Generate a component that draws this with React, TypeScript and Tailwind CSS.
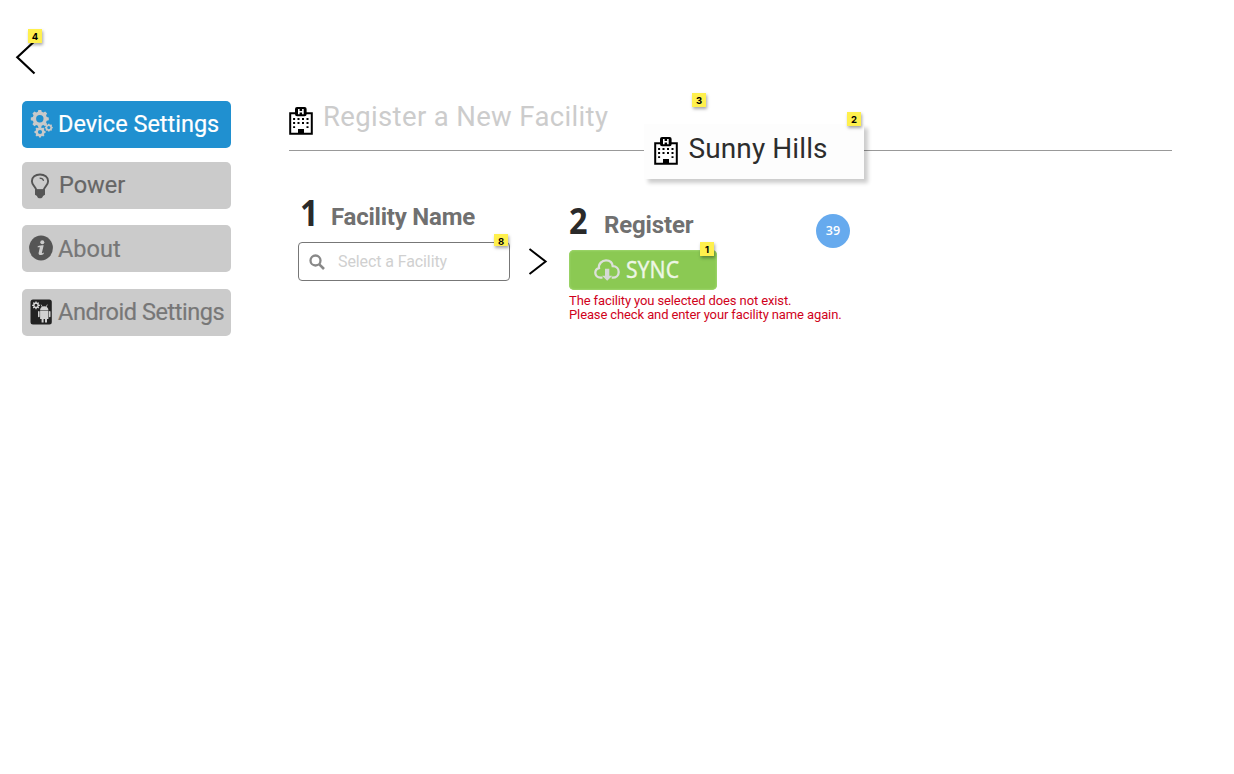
import type { ReactNode } from "react";
import clsx from "clsx";

function Badge({ n, className, tail }: { n: number; className: string; tail?: boolean }) {
  return (
    <span
      className={clsx(
        "absolute z-10 flex w-[14px] items-center justify-center bg-[#fff04d] font-['Inter',sans-serif] text-[9.5px] font-bold leading-none text-black shadow-[1px_2px_3px_rgba(0,0,0,0.35)]",
        tail ? "h-[12px] pt-[3px]" : "h-[14px] pt-px",
        className,
      )}
    >
      {n}
    </span>
  );
}

function HospitalIcon({ className }: { className?: string }) {
  return (
    <svg viewBox="0 0 24 28" className={clsx("h-[28px] w-[24px] shrink-0", className)} fill="none">
      <path d="M6.5 6.2H1.2V26.8H22.8V6.2H17" stroke="#000" strokeWidth="2" />
      <rect x="7" y="1.1" width="9.6" height="7.2" rx="1" stroke="#000" strokeWidth="2" fill="#000" />
      <path d="M9.8 1.9V7.3M13.9 1.9V7.3M9.8 4.7H13.9" stroke="#fff" strokeWidth="1.6" />
      <path
        d="M4.1 11.1h2v1.8h-2zM8.5 11.1h2v1.8h-2zM13 11.1h2v1.8h-2zM17.500 11.1h2v1.8h-2zM4.1 15.1h2v1.8h-2zM8.5 15.1h2v1.8h-2zM13 15.1h2v1.8h-2zM17.500 15.1h2v1.8h-2zM4.1 19.3h2v1.8h-2zM17.500 19.3h2v1.8h-2zM9 22h6v5H9z"
        fill="#000"
      />
    </svg>
  );
}

function gear(cx: number, cy: number, outer: number, inner: number, teeth: number) {
  const step = (Math.PI * 2) / teeth;
  const points: string[] = [];
  for (let i = 0; i < teeth; i++) {
    const a = i * step - Math.PI / 2;
    for (const [r, o] of [[inner, -0.34], [outer, -0.2], [outer, 0.2], [inner, 0.34]]) {
      points.push(`${(cx + r * Math.cos(a + o * step)).toFixed(2)} ${(cy + r * Math.sin(a + o * step)).toFixed(2)}`);
    }
  }
  return `M${points.join("L")}Z`;
}

function hole(cx: number, cy: number, r: number) {
  return `M${cx - r} ${cy}a${r} ${r} 0 1 0 ${r * 2} 0a${r} ${r} 0 1 0 ${-r * 2} 0Z`;
}

function GearsIcon() {
  return (
    <svg viewBox="0 0 24 28" className="h-[28px] w-[24px]" fill="#c9c9c9" fillRule="evenodd">
      <path d={gear(9.8, 8.8, 9.1, 7.2, 8) + hole(9.8, 8.8, 3.7)} />
      <path d={gear(10, 22, 5.6, 4.5, 8) + hole(10, 22, 2.1)} />
      <path d={gear(18.8, 17.6, 4, 3.3, 8) + hole(18.8, 17.6, 1.6)} />
    </svg>
  );
}

function BulbIcon() {
  return (
    <svg viewBox="0 0 20 26" className="h-[26px] w-[20px]" fill="none">
      <path d="M6.300 17.2C5.800 13.300 1.900 12.400 1.900 8.200C1.900 4.200 5.400 1.500 10 1.500S18.100 4.200 18.100 8.200C18.100 12.400 14.200 13.300 13.700 17.200Z" stroke="#555" strokeWidth="1.900" />
      <path d="M9.6 5.200c2 0 3.600 .9 4 2.600" stroke="#555" strokeWidth="1.200" />
      <path d="M5 16.5h10v5.2l-2 1.2c-.3 1.5-1.4 2.4-3 2.4s-2.700-.9-3-2.400l-2-1.200z" fill="#555" />
    </svg>
  );
}

function InfoIcon() {
  return (
    <svg viewBox="0 0 24 26" className="h-[26px] w-[24px]">
      <ellipse cx="12" cy="13" rx="11.900" ry="12.400" fill="#555" />
      <circle cx="13.300" cy="7.300" r="2" fill="#ccc" />
      <path d="M8.800 11.300C10.500 10.500 12.500 10.300 14.700 10.300L12.900 17.700C12.800 18.500 13.600 18.300 14.900 17.400L14.600 18.900C12.800 20.300 9.200 20.700 9.600 18L10.900 12.300L8.500 12.200Z" fill="#ccc" />
    </svg>
  );
}

function AndroidIcon() {
  return (
    <svg viewBox="0 0 22 26" className="h-[26px] w-[22px]">
      <rect x="0.500" y="0.500" width="21.300" height="25" rx="2.500" fill="#222" />
      <path d={gear(6, 6.3, 3.9, 2.8, 8) + hole(6, 6.3, 1.5)} fill="#ddd" fillRule="evenodd" />
      <g fill="#d2d2d2">
        <path d="M10.100 10.900C10.100 8.600 12 7.200 14.200 7.200S18.400 8.600 18.400 10.900Z" />
        <path d="M10.100 11.500h8.300v8.400h-1.400v3.600h-2v-3.600h-1.400v3.600h-2v-3.600H10.100z" />
        <rect x="8" y="12" width="1.600" height="6.300" rx="0.800" />
        <rect x="18.900" y="12" width="1.600" height="6.300" rx="0.800" />
      </g>
      <path d="M12.300 8L11.100 5.600M16.100 8L17.300 5.600" stroke="#d2d2d2" strokeWidth="0.800" />
    </svg>
  );
}

function NavButton({ icon, label, active, gap, iconBox, text }: { icon: ReactNode; label: string; active?: boolean; gap: string; iconBox: string; text: string }) {
  return (
    <button
      className={clsx(
        "flex h-[47px] w-[209px] items-center rounded-[5px] text-left",
        active ? "bg-[#2090d0] text-white" : "bg-[#cbcbcb]",
        gap,
      )}
    >
      <span className={clsx("flex w-[36px] shrink-0 items-center", iconBox)}>{icon}</span>
      <span className={clsx("whitespace-nowrap text-[23.500px] leading-[28px]", text)}>{label}</span>
    </button>
  );
}

function Sidebar() {
  return (
    <nav className="w-[289px] shrink-0 pt-[40px]">
      <div className="relative ml-[15px] h-[61px] w-[28px]">
        <svg viewBox="0 0 21 35" className="h-[35px] w-[21px]" fill="none">
          <path d="M19.500 1.200L2.300 17.300L19.500 33.500" stroke="#000" strokeWidth="2.200" />
        </svg>
        <Badge n={4} className="left-[13px] top-[-11px]" />
      </div>
      <div className="ml-[22px] flex flex-col">
        <NavButton active icon={<GearsIcon />} label="Device Settings" gap="" iconBox="pl-[8px] pb-[2px]" text="pb-[2px] [-webkit-text-stroke:0.2px_white]" />
        <NavButton icon={<BulbIcon />} label="Power" gap="mt-[14px]" iconBox="pl-[8px]" text="pb-[2px] pl-px text-[#666] [-webkit-text-stroke:0.2px_#666]" />
        <NavButton icon={<InfoIcon />} label="About" gap="mt-[16px]" iconBox="pl-[7px] pb-px" text="text-[#777] [-webkit-text-stroke:0.2px_#777]" />
        <NavButton icon={<AndroidIcon />} label="Android Settings" gap="mt-[17px]" iconBox="pl-[8px] pb-[2px]" text="pb-[2px] tracking-[-0.450px] text-[#777] [-webkit-text-stroke:0.2px_#777]" />
      </div>
    </nav>
  );
}

function FacilityCard() {
  return (
    <div className="absolute left-[355px] top-[25px] flex h-[55px] w-[220px] bg-[#fdfdfd] pl-[10px] pt-[13px] shadow-[4px_4px_4px_rgba(0,0,0,0.2)]">
      <HospitalIcon />
      <span className="ml-[10.500px] mt-[-5px] whitespace-nowrap text-[28px] leading-[34px] tracking-[0.100px] text-[#2d2d2d]">Sunny Hills</span>
      <Badge n={2} className="left-[203px] top-[-12px]" />
    </div>
  );
}

function StepTitle({ n, title, numeral, text }: { n: number; title: string; numeral: string; text: string }) {
  return (
    <div className="flex h-[40px] items-start whitespace-nowrap">
      <span className={clsx("origin-left scale-x-[0.9] font-['Noto_Sans',sans-serif] text-[36px] font-bold leading-[40px] text-[#2a2a2a]", numeral)}>{n}</span>
      <span className={clsx("pt-[9px] text-[24px] font-bold leading-[30px] text-[#707070]", text)}>{title}</span>
    </div>
  );
}

export default function App() {
  return (
    <div className="flex h-[774px] w-[1234px] overflow-hidden bg-white font-['Roboto',sans-serif]">
      <Sidebar />
      <main className="w-[883px] pt-[99px]">
        <header className="relative h-[52px] border-b border-[#999]">
          <div className="flex">
            <HospitalIcon className="mt-[8px]" />
            <h1 className="ml-[10px] whitespace-nowrap text-[27.500px] leading-[36px] tracking-[0.350px] text-[#ccc]">Register a New Facility</h1>
          </div>
          <Badge n={3} className="left-[403px] top-[-6px]" />
          <FacilityCard />
        </header>

        <section className="flex">
          <div className="w-[231px] pl-[9px] pt-[42px]">
            <StepTitle n={1} title="Facility Name" numeral="w-[31px] ml-[2px]" text="tracking-[-0.220px]" />
            <div className="relative mt-[9px] flex h-[39px] w-[212px] items-center rounded-[4px] border border-[#777] pl-[10px]">
              <svg viewBox="0 0 16 16" className="h-[16px] w-[16px]" fill="none" stroke="#888">
                <circle cx="6.500" cy="6.500" r="5" strokeWidth="2.300" />
                <path d="M10.300 10.300L15 15" strokeWidth="2.600" />
              </svg>
              <span className="ml-[13px] whitespace-nowrap text-[16px] tracking-[-0.100px] text-[#d0d0d0]">Select a Facility</span>
              <Badge n={8} tail className="left-[195px] top-[-9px]" />
            </div>
          </div>
          <svg viewBox="0 0 20 28" className="ml-[8px] mt-[96px] h-[28px] w-[20px]" fill="none">
            <path d="M1.500 2L17.600 14.500L1.500 27" stroke="#000" strokeWidth="2" />
          </svg>
          <div className="w-[268px] pl-[21px] pt-[50px]">
            <StepTitle n={2} title="Register" numeral="w-[35px]" text="tracking-[-0.150px]" />
            <button className="relative mt-[9px] flex h-[40px] w-[148px] items-center rounded-[5px] bg-[#8bc953] pl-[25px] shadow-[inset_0_0_2px_1px_#9ed56c]">
              <svg viewBox="0 0 26 22" className="h-[22px] w-[26px]" fill="none">
                <path d="M8.500 18.600H6.600C3.300 18.600 1.300 16.500 1.300 13.800C1.300 11.400 2.900 9.700 5 9.200C4.300 4.600 8 1.400 12 1.400C16 1.400 18.400 3.900 18.700 7.200C22.200 7.200 24.700 9.700 24.700 12.900C24.700 16.400 22 18.600 18.800 18.600H17.700" stroke="#dce0da" strokeWidth="2.300" />
                <path d="M11 9.700h4.300v7h3L13.200 21.800L8.100 16.700h2.900z" fill="#d5d9d4" />
              </svg>
              <span className="ml-[6px] inline-block origin-left scale-x-[0.92] whitespace-nowrap pb-[2px] font-['Noto_Sans',sans-serif] text-[23px] leading-[38px] text-[#edf6e5] [-webkit-text-stroke:0.3px_#edf6e5]">SYNC</span>
              <Badge n={1} className="left-[131px] top-[-8px]" />
            </button>
            <p className="mt-[4px] whitespace-nowrap text-[13px] leading-[14px] tracking-[-0.115px] text-[#d0021b]">
              The facility you selected does not exist.
              <br />
              Please check and enter your facility name again.
            </p>
          </div>
          <div className="mt-[63px] flex h-[34px] w-[34px] items-center justify-center rounded-full bg-[#66aaee] pt-px font-['Open_Sans',sans-serif] text-[12.500px] font-semibold text-white">39</div>
        </section>
      </main>
    </div>
  );
}
